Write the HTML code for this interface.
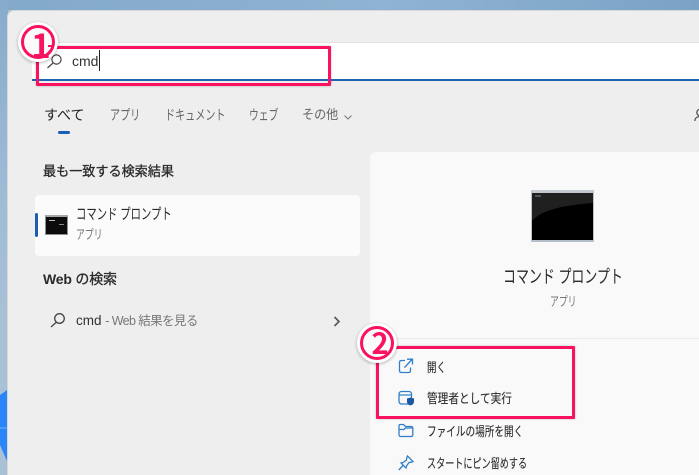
<!DOCTYPE html>
<html lang="ja"><head><meta charset="utf-8">
<style>
html,body{margin:0;padding:0;width:699px;height:475px;overflow:hidden}
#root{width:699px;height:475px;overflow:hidden;position:relative;background:#a9c1d6;font-family:"Liberation Sans","Noto Sans CJK JP",sans-serif;color:#222}
#bg{position:absolute;left:0;top:0;width:699px;height:10px;background:linear-gradient(90deg,#83a9c9,#8fb3d2 55%,#7ba3c6)}
#bg2{position:absolute;left:0;top:0;width:8px;height:340px;background:linear-gradient(180deg,#86abcb,#9fbcd6 60%,#a9c1d6)}
#win{position:absolute;left:7px;top:10px;width:692px;height:465px;background:#eeeeee;border-radius:7px 0 0 0;border:1px solid #d5d7d9;border-right:0;border-bottom:0;box-sizing:border-box}
.t{position:absolute;white-space:nowrap;line-height:1;filter:blur(.3px);transform-origin:0 50%}
.box{position:absolute}
svg{position:absolute;overflow:visible}
</style></head><body>
<div id="root">
<div id="bg"></div><div id="bg2"></div>
<svg style="left:0;top:385px" width="8" height="80"><path d="M7 5V76L0 60V10Z" fill="#2a85f8"/><path d="M0 43H7" stroke="#6fb0fb" stroke-width="1"/></svg>
<div id="win"></div>

<!-- search box -->
<div class="box" style="left:32px;top:42px;width:667px;height:38px;background:#fff;border-top:1px solid #e2e2e2;box-sizing:border-box;border-radius:3px 0 0 3px"></div>
<div class="box" style="left:32px;top:79px;width:667px;height:2px;background:#1e63b8"></div>
<svg style="left:46px;top:52px" width="18" height="18" fill="none" stroke="#444" stroke-width="1.2"><circle cx="10.5" cy="7.5" r="4.6"/><path d="M7 11L1.5 16"/></svg>
<div class="t" style="left:72px;top:54px;font-size:14px;color:#333">cmd</div>
<div class="box" style="left:99px;top:50px;width:1px;height:21px;background:#222"></div>

<!-- tabs -->
<div class="t" style="left:44px;top:108px;font-size:14px;color:#222">すべて</div>
<div class="box" style="left:58px;top:131px;width:12px;height:3px;border-radius:2px;background:#1a5fb4"></div>
<div class="t" style="left:110px;top:108px;font-size:14px;color:#666;transform:scaleX(.72)">アプリ</div>
<div class="t" style="left:165px;top:108px;font-size:14px;color:#666;transform:scaleX(.72)">ドキュメント</div>
<div class="t" style="left:249px;top:108px;font-size:14px;color:#666;transform:scaleX(.7)">ウェブ</div>
<div class="t" style="left:302px;top:108px;font-size:13px;color:#666;transform:scaleX(.93)">その他</div>
<svg style="left:344px;top:115px" width="8" height="5" fill="none" stroke="#777"><path d="M0.5 .5L4 4L7.5 .5"/></svg>
<svg style="left:694px;top:108px" width="7" height="15" fill="none" stroke="#444" stroke-width="1.2"><circle cx="6" cy="4.5" r="3.2"/><path d="M.8 13C1 9 4 8.5 7 8.5"/></svg>

<!-- left column -->
<div class="t" style="left:43px;top:165px;font-size:13.5px;color:#2a2a2a;-webkit-text-stroke:.3px #2a2a2a;transform:scaleX(.97)">最も一致する検索結果</div>
<div class="box" style="left:35px;top:195px;width:325px;height:61px;background:#fbfbfb;border-radius:4px"></div>
<div class="box" style="left:35px;top:213px;width:3px;height:24px;background:#1a5fb4;border-radius:2px"></div>
<div class="box" style="left:45px;top:215px;width:23px;height:20px;background:#0c0c0c;border:1px solid #8a8f94;border-top:2px solid #a5a8ab;box-sizing:border-box;filter:blur(.3px)"></div>
<div class="box" style="left:49px;top:220px;width:6px;height:1px;background:#bbb"></div>
<div class="box" style="left:59px;top:224px;width:5px;height:1px;background:#888"></div>
<div class="t" style="left:76px;top:207px;font-size:15px;color:#2a2a2a;transform:scaleX(.69)">コマンド プロンプト</div>
<div class="t" style="left:76px;top:228px;font-size:13px;color:#777;transform:scaleX(.68)">アプリ</div>
<div class="t" style="left:43px;top:272px;font-size:14px;color:#2a2a2a;font-weight:bold;letter-spacing:-.2px">Web <span style="font-weight:400;-webkit-text-stroke:.3px #2a2a2a">の検索</span></div>
<svg style="left:50px;top:312px" width="16" height="16" fill="none" stroke="#444" stroke-width="1.3"><circle cx="9.5" cy="6.5" r="4.8"/><path d="M6 10.5L1 15"/></svg>
<div class="t" style="left:76px;top:314px;font-size:13.5px;color:#333">cmd <span style="color:#777;font-size:12.5px;letter-spacing:-.6px">- Web 結果を見る</span></div>
<svg style="left:333px;top:316px" width="8" height="11" fill="none" stroke="#555" stroke-width="1.6"><path d="M1.5 1L6 5.5L1.5 10"/></svg>

<!-- right panel -->
<div class="box" style="left:370px;top:152px;width:329px;height:323px;background:#f9f9f9;border-radius:7px 0 0 0"></div>
<div class="box" style="left:531px;top:190px;width:63px;height:52px;background:#000;border:1px solid #b8c2cc;border-top:3px solid #c4c9cf;border-bottom:2px solid #b5c0cc;box-sizing:border-box;overflow:hidden">
 <svg width="61" height="47" style="left:0;top:0"><path d="M0 0H61V10C35 12 10 16 0 28Z" fill="#202020"/><path d="M3 3H9" stroke="#888" stroke-width="1"/></svg>
</div>
<div class="t" style="left:503px;top:268px;font-size:18px;color:#2a2a2a;transform:scaleX(.72)">コマンド プロンプト</div>
<div class="t" style="left:550px;top:295px;font-size:13px;color:#777;transform:scaleX(.68)">アプリ</div>
<div class="box" style="left:370px;top:338px;width:329px;height:1px;background:#ebebeb"></div>

<svg style="left:398px;top:358px" width="16" height="16" fill="none" stroke="#2f7fc8" stroke-width="1.3"><path d="M7 2.5H3.5Q1.5 2.5 1.5 4.5V12.5Q1.5 14.5 3.5 14.5H10.5Q12.5 14.5 12.5 12.5V9.5"/><path d="M6.5 9.5L14 1.5M9 1.2H14.5V6.5"/></svg>
<div class="t" style="left:427px;top:361px;font-size:13px;color:#2a2a2a;-webkit-text-stroke:.12px #2a2a2a;transform:scaleX(.73)">開く</div>

<svg style="left:398px;top:390px" width="17" height="16"><rect x="1" y="1.5" width="12.5" height="12.5" rx="2.5" fill="none" stroke="#2f7fc8" stroke-width="1.3"/><path d="M1 5H13.5" stroke="#2f7fc8" stroke-width="1.2"/><path d="M9 8.5L12.5 7.5L16 8.5V11.5Q16 14.5 12.5 15.5Q9 14.5 9 11.5Z" fill="#1a57a8"/></svg>
<div class="t" style="left:427px;top:392px;font-size:13px;color:#2a2a2a;-webkit-text-stroke:.12px #2a2a2a;transform:scaleX(.82)">管理者として実行</div>

<svg style="left:398px;top:423px" width="16" height="15" fill="none" stroke="#2f7fc8" stroke-width="1.3"><path d="M1 3Q1 1.5 2.5 1.5H5.5L7.5 3.5H13Q14.8 3.5 14.8 5.2V11.5Q14.8 13.5 13 13.5H3Q1 13.5 1 11.5Z"/><path d="M1 6.5H6L7.5 5H14.8"/></svg>
<div class="t" style="left:427px;top:425px;font-size:13px;color:#2a2a2a;-webkit-text-stroke:.12px #2a2a2a;transform:scaleX(.74)">ファイルの場所を開く</div>

<svg style="left:398px;top:455px" width="16" height="16" fill="none" stroke="#2f7fc8" stroke-width="1.3"><path d="M9.5 1L15 6.5L13.5 7.2L11 7.5L8.5 11L8 13L3 8L5 7.5L8.5 5L8.8 2.5Z"/><path d="M5 10.5L.8 15"/></svg>
<div class="t" style="left:427px;top:457px;font-size:13px;color:#2a2a2a;-webkit-text-stroke:.12px #2a2a2a;transform:scaleX(.7)">スタートにピン留めする</div>

<!-- annotations -->
<div class="box" style="left:36px;top:46px;width:295px;height:40px;border:3px solid #f8125f;box-sizing:border-box;border-radius:1px;box-shadow:0 0 2px rgba(0,0,0,.25)"></div>
<div class="box" style="left:376px;top:346px;width:199px;height:73px;border:3px solid #f8125f;box-sizing:border-box;border-radius:1px;box-shadow:0 0 2px rgba(0,0,0,.25)"></div>

<div class="box" style="left:18px;top:22px;width:40px;height:40px;border-radius:50%;background:#fff;box-shadow:0 1px 3px rgba(0,0,0,.3)"></div>
<div class="box" style="left:21px;top:25px;width:34px;height:34px;border-radius:50%;border:3px solid #f8125f;box-sizing:border-box;background:#fafafa"></div>
<div class="box" style="left:48px;top:45px;width:4px;height:2px;background:#f8125f"></div>
<div class="t" style="left:31px;top:26px;font-family:'Noto Sans CJK JP',sans-serif;font-size:33px;font-weight:700;color:#f8125f;width:20px;text-align:center;line-height:36px;filter:none">1</div>

<div class="box" style="left:357px;top:323px;width:40px;height:40px;border-radius:50%;background:#fff;box-shadow:0 1px 3px rgba(0,0,0,.3)"></div>
<div class="box" style="left:360px;top:326px;width:34px;height:34px;border-radius:50%;border:3px solid #f8125f;box-sizing:border-box;background:#fafafa"></div>
<div class="t" style="left:368px;top:324px;font-family:'Noto Sans CJK JP',sans-serif;font-size:29px;font-weight:700;color:#f8125f;width:24px;text-align:center;line-height:36px;filter:none">2</div>
</div>
</body></html>
